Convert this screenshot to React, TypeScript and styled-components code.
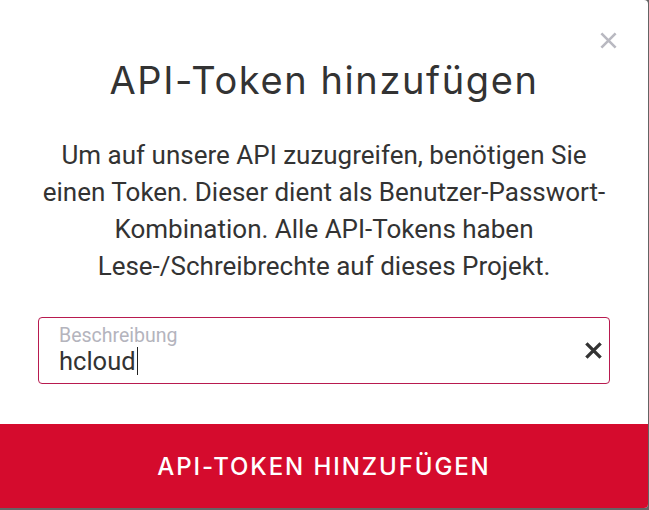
import React from "react";
import styled, { createGlobalStyle } from "styled-components";

const Global = createGlobalStyle`
  html, body { margin: 0; padding: 0; }
  body { background: #646464; width: 649px; height: 510px; overflow: hidden; }
  * { box-sizing: border-box; }
`;

const Modal = styled.div`
  position: relative;
  width: 648px;
  height: 508px;
  background: #ffffff;
  border-radius: 0 4px 4px 0;
  display: flex;
  flex-direction: column;
  overflow: hidden;
`;

const Close = styled.button`
  position: absolute;
  top: 30px;
  right: 30px;
  width: 20px;
  height: 20px;
  padding: 0;
  border: 0;
  background: transparent;
  display: flex;
  align-items: center;
  justify-content: center;
`;

const Content = styled.div`
  flex: 1;
  display: flex;
  flex-direction: column;
  align-items: center;
  padding: 57px 37px 0 37px;
`;

const Title = styled.h1`
  margin: 0;
  font-family: "Inter", "Lato", sans-serif;
  font-weight: 400;
  font-size: 38px;
  line-height: 46px;
  color: #333333;
  letter-spacing: 1.6px;
`;

const Text = styled.p`
  margin: 34px 0 0 0;
  width: 590px;
  text-align: center;
  font-family: "Roboto", sans-serif;
  font-size: 26px;
  line-height: 37px;
  color: #333333;
`;

const Field = styled.div`
  margin-top: 32px;
  width: 572px;
  height: 67px;
  border: 1px solid #b81a4f;
  border-radius: 4px;
  display: flex;
  align-items: center;
  padding: 0 6px 0 20px;
`;

const FieldInner = styled.div`
  flex: 1;
  display: flex;
  flex-direction: column;
  font-family: "Roboto", sans-serif;
`;

const Label = styled.span`
  font-size: 19.5px;
  line-height: 22px;
  color: #b4b4bd;
  margin-top: -2px;
`;

const Value = styled.span`
  font-size: 25.5px;
  line-height: 28px;
  color: #333333;
  display: flex;
  align-items: center;
`;

const Caret = styled.span`
  display: inline-block;
  width: 1px;
  height: 28px;
  background: #222;
  margin-left: 1px;
`;

const Clear = styled.button`
  width: 20px;
  height: 20px;
  padding: 0;
  border: 0;
  background: transparent;
  display: flex;
  align-items: center;
  justify-content: center;
`;

const Submit = styled.button`
  width: 100%;
  height: 84px;
  border: 0;
  background: #d50b2d;
  color: #ffffff;
  font-family: "Inter", "Lato", sans-serif;
  font-size: 24px;
  font-weight: 500;
  letter-spacing: 1.9px;
  text-transform: uppercase;
  display: flex;
  align-items: center;
  justify-content: center;
  padding: 0;
`;

const X = ({ color, w, s }: { color: string; w: number; s: number }) => (
  <svg width={s} height={s} viewBox="0 0 16 16">
    <path d="M2 2 L14 14 M14 2 L2 14" stroke={color} strokeWidth={w} strokeLinecap="butt" />
  </svg>
);

export default function App() {
  return (
    <>
      <Global />
      <Modal>
        <Close aria-label="Schließen">
          <X color="#b9b9c1" w={2.2} s={19} />
        </Close>
        <Content>
          <Title>API-Token hinzufügen</Title>
          <Text>
            Um auf unsere API zuzugreifen, benötigen Sie einen Token. Dieser dient als Benutzer-Passwort-Kombination. Alle API-Tokens haben Lese-/Schreibrechte auf dieses Projekt.
          </Text>
          <Field>
            <FieldInner>
              <Label>Beschreibung</Label>
              <Value>
                hcloud<Caret />
              </Value>
            </FieldInner>
            <Clear aria-label="Leeren">
              <X color="#333333" w={2.8} s={19} />
            </Clear>
          </Field>
        </Content>
        <Submit>API-Token hinzufügen</Submit>
      </Modal>
    </>
  );
}
